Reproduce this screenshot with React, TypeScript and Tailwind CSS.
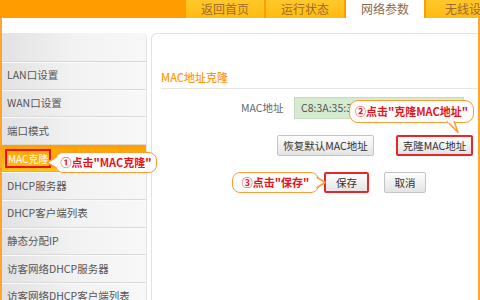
import React from "react";

const font = { fontFamily: '"Noto Sans CJK SC", "Noto Sans", sans-serif' };

const menu = [
  "LAN口设置",
  "WAN口设置",
  "端口模式",
  "MAC克隆",
  "DHCP服务器",
  "DHCP客户端列表",
  "静态分配IP",
  "访客网络DHCP服务器",
  "访客网络DHCP客户端列表",
];

function Tab({ label, active, last }: { label: string; active?: boolean; last?: boolean }) {
  return (
    <div
      className={
        "h-[18px] flex items-center text-[12px] leading-none whitespace-nowrap overflow-hidden " +
        (last ? "flex-1 justify-start pl-[19px] " : "w-[78px] justify-center ") +
        (active
          ? "bg-white text-[#8f6a4a]"
          : "bg-gradient-to-b from-[#ffc82a] to-[#ffbb0d] text-[#a06a2c]")
      }
    >
      {label}
    </div>
  );
}

function Btn({ children, red, w }: { children: React.ReactNode; red?: boolean; w: string }) {
  return (
    <div
      className={
        "h-[21px] flex items-center justify-center text-[10.5px] text-[#333] rounded-[2px] bg-gradient-to-b from-[#fefefe] to-[#e4e4e4] " +
        w +
        (red ? " border-2 border-[#e8262a]" : " border border-[#c4c4c4]")
      }
    >
      {children}
    </div>
  );
}

export default function App() {
  return (
    <div className="w-[480px] h-[300px] overflow-hidden bg-white relative" style={font}>
      {/* header */}
      <div className="h-[18px] flex bg-[#ff9c00]">
        <div className="w-[186px]" />
        <div className="flex flex-1 gap-[2px] overflow-hidden">
          <Tab label="返回首页" />
          <Tab label="运行状态" />
          <Tab label="网络参数" active />
          <Tab label="无线设置" last />
        </div>
      </div>

      {/* body */}
      <div className="flex h-[282px] pt-[15px] border-l-2 border-r-2 border-[#ffa52e]">
        {/* sidebar */}
        <div className="w-[145px] rounded-tr-[5px] overflow-hidden bg-gradient-to-r from-[#e2e2e2] via-[#f2f2f2] to-[#f8f8f8] border-r border-[#e6e6e6]">
          <div className="h-[29px] border-b border-[#d6d6d6]" />
          {menu.map((m, i) =>
            i === 3 ? (
              <div
                key={m}
                className="h-[27.6px] flex items-center pl-[3px] bg-gradient-to-b from-[#ff9f00] to-[#ffc01c] border-b border-[#ffb000]"
              >
                <div className="h-[19px] px-[1px] flex items-center border-2 border-[#e8141b] text-white text-[10px]">
                  {m}
                </div>
              </div>
            ) : (
              <div
                key={m}
                className="h-[27.6px] flex items-center pl-[5px] text-[10.5px] text-[#555] border-b border-[#d9d9d9] shadow-[inset_0_1px_0_#fbfbfb] whitespace-nowrap"
              >
                {m}
              </div>
            )
          )}
        </div>

        {/* main panel */}
        <div className="ml-[4px] flex-1 border-l border-t border-[#e2e2e2] rounded-tl-[6px] pl-[9px]">
          <div className="pt-[36px] pb-[4px] border-b border-[#e6e6e6] text-[11px] leading-[14px] text-[#ff9a10] font-medium">
            MAC地址克隆
          </div>

          <div className="mt-[8px] flex items-center">
            <div className="ml-[80px] w-[53px] text-[10.5px] text-[#666]">MAC地址</div>
            <div className="w-[170px] h-[22px] bg-[#d4ebcf] border border-[#c6dcc2] flex items-center pl-[6px] text-[10.5px] text-[#555]">
              C8:3A:35:3E
            </div>
          </div>

          <div className="mt-[16px] flex">
            <div className="ml-[116px]">
              <Btn w="w-[97px]">恢复默认MAC地址</Btn>
            </div>
            <div className="ml-[22px]">
              <Btn w="w-[77px]" red>
                克隆MAC地址
              </Btn>
            </div>
          </div>

          <div className="mt-[16px] flex">
            <div className="ml-[163px]">
              <Btn w="w-[45px]" red>
                保存
              </Btn>
            </div>
            <div className="ml-[15px]">
              <Btn w="w-[42px]">取消</Btn>
            </div>
          </div>
        </div>
      </div>

      {/* callout 1 */}
      <div className="absolute left-[55px] top-[152px] w-[102px] h-[21px] rounded-[8px] border-[1.5px] border-[#ff9b2f] bg-white flex items-center justify-center text-[11px] font-bold text-[#e8141b] leading-none">
        ①点击"MAC克隆"
      </div>
      <svg className="absolute left-[46px] top-[156px]" width="11" height="13" viewBox="0 0 11 13">
        <path d="M10.5 1 L1 6.5 L10.5 12" fill="white" stroke="#ff9b2f" strokeWidth="1.5" strokeLinejoin="round" />
        <rect x="9.6" y="2" width="2" height="9" fill="white" />
      </svg>

      {/* callout 2 */}
      <div className="absolute left-[349px] top-[100px] w-[125px] h-[23px] rounded-[9px] border-[1.5px] border-[#ff9b2f] bg-white flex items-center justify-center text-[11px] font-bold text-[#e8141b] leading-none">
        ②点击"克隆MAC地址"
      </div>
      <svg className="absolute left-[444px] top-[120px]" width="18" height="14" viewBox="0 0 18 14">
        <path d="M3 1 L14 12.5 L10 1" fill="white" stroke="#ff9b2f" strokeWidth="1.5" strokeLinejoin="round" />
        <rect x="3.8" y="0" width="5.5" height="2.6" fill="white" />
      </svg>

      {/* callout 3 */}
      <div className="absolute left-[232px] top-[172px] w-[87px] h-[21px] rounded-[8px] border-[1.5px] border-[#ff9b2f] bg-white flex items-center justify-center text-[11px] font-bold text-[#e8141b] leading-none">
        ③点击"保存"
      </div>
      <svg className="absolute left-[316px] top-[176px]" width="10" height="13" viewBox="0 0 10 13">
        <path d="M0.5 1 L9 6.5 L0.5 12" fill="white" stroke="#ff9b2f" strokeWidth="1.5" strokeLinejoin="round" />
        <rect x="-1" y="2" width="2" height="9" fill="white" />
      </svg>
    </div>
  );
}
